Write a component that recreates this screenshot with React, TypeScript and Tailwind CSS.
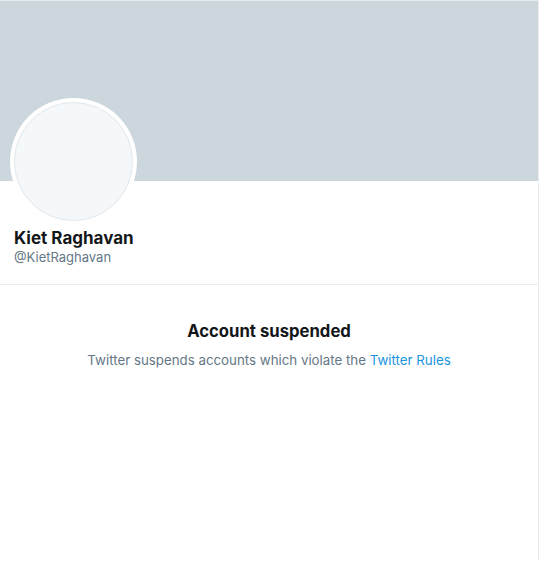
export default function App() {
  return (
    <div className="min-h-[561px] w-[541px] bg-white font-['Inter','Liberation_Sans',sans-serif]">
      <div className="w-[539px] min-h-[561px] border-t border-r border-[#e6ecf0]">
        <div className="h-[180px] bg-[#ccd6dd]" />

        <div className="px-[10px]">
          <div className="-mt-[83px] w-[127px] h-[127px] rounded-full bg-white p-[4px]">
            <div className="w-full h-full rounded-full bg-[#f5f8fa] border border-[#e1e8ed]" />
          </div>
          <div className="pl-[4px] pt-[2px] pb-[19px]">
            <div className="text-[17px] leading-[22px] font-bold text-[#14171a]">Kiet Raghavan</div>
            <div className="text-[13px] leading-[16px] text-[#657786]">@KietRaghavan</div>
          </div>
        </div>

        <div className="border-t border-[#e6ecf0] pt-[35px] flex flex-col items-center">
          <div className="text-[16.7px] leading-[22px] font-bold text-[#14171a]">Account suspended</div>
          <div className="mt-[9px] text-[13.3px] leading-[18px] text-[#657786]">
            Twitter suspends accounts which violate the{" "}
            <a className="text-[#1b95e0]">Twitter Rules</a>
          </div>
        </div>
      </div>
    </div>
  );
}
